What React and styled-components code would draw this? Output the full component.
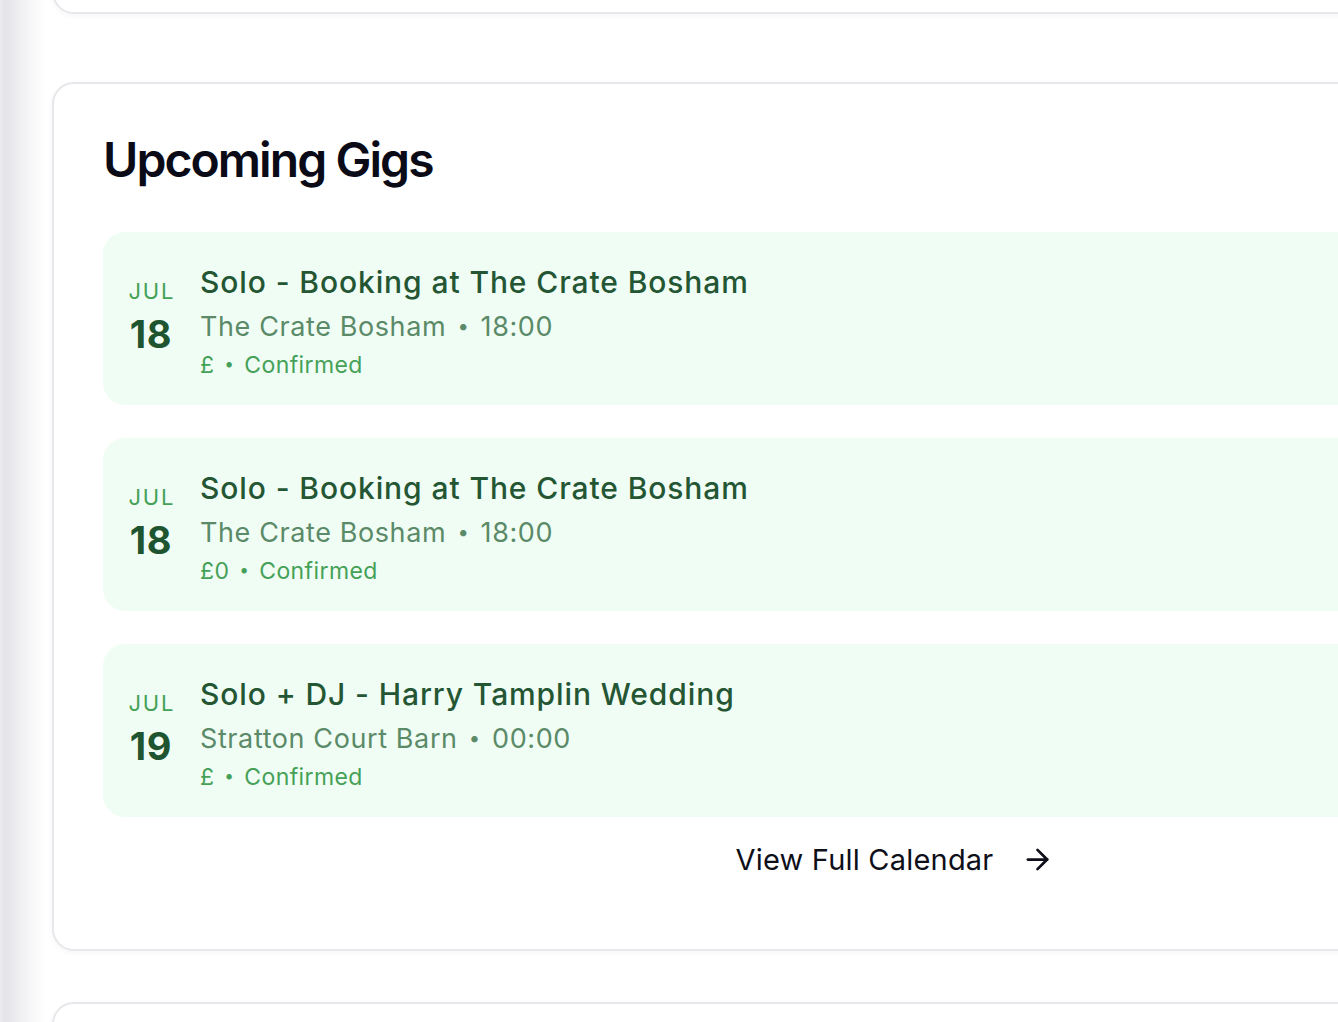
import React from 'react';
import styled, { createGlobalStyle } from 'styled-components';
import { ArrowRight } from 'lucide-react';

const gigs = [
  { id: 1, month: 'JUL', day: '18', title: 'Solo - Booking at The Crate Bosham', venue: 'The Crate Bosham', time: '18:00', fee: '£', status: 'Confirmed' },
  { id: 2, month: 'JUL', day: '18', title: 'Solo - Booking at The Crate Bosham', venue: 'The Crate Bosham', time: '18:00', fee: '£0', status: 'Confirmed' },
  { id: 3, month: 'JUL', day: '19', title: 'Solo + DJ - Harry Tamplin Wedding', venue: 'Stratton Court Barn', time: '00:00', fee: '£', status: 'Confirmed' },
];

const App = () => {
  return (
    <>
      <GlobalStyle />
      <Page>
        <Card $stub />

        <Card>
          <Heading>Upcoming Gigs</Heading>
          <GigList>
            {gigs.map((gig) => {
              return (
                <GigCard key={gig.id}>
                  <DateCol>
                    <Month>{gig.month}</Month>
                    <Day>{gig.day}</Day>
                  </DateCol>
                  <Info>
                    <GigTitle>{gig.title}</GigTitle>
                    <Venue>{gig.venue} <Dot>•</Dot> {gig.time}</Venue>
                    <Meta>{gig.fee} <Dot>•</Dot> {gig.status}</Meta>
                  </Info>
                </GigCard>
              )
            })}
          </GigList>
          <Footer>
            <CalendarLink href="#">
              View Full Calendar
              <ArrowRight size={33} strokeWidth={2} />
            </CalendarLink>
          </Footer>
        </Card>

        <Card />
      </Page>
    </>
  )
}

export default App;

const GlobalStyle = createGlobalStyle`
  html, body {
    margin: 0;
    padding: 0;
    overflow: hidden;
    background: #ffffff;
  }
  body {
    font-family: Inter, "Noto Sans", sans-serif;
    -webkit-font-smoothing: antialiased;
  }
`

const Page = styled.div`
  min-height: 100vh;
  box-sizing: border-box;
  padding-left: 52px;
  display: flex;
  flex-direction: column;
  gap: 51px;
  background: linear-gradient(90deg, #ececf0 0px, #e3e3e8 5px, #efeff2 20px, #f9f9fa 34px, #ffffff 46px);
`

const Card = styled.section`
  width: 1686px;
  box-sizing: border-box;
  flex-shrink: 0;
  background: #ffffff;
  border: 2px solid #e7e7ec;
  border-radius: 22px;
  box-shadow: 0 2px 6px rgba(20, 20, 40, 0.04);
  padding: 47px 49px 48px;
  min-height: ${(p) => (p.$stub ? '120px' : '200px')};
  margin-top: ${(p) => (p.$stub ? '-106px' : '0')};
  margin-bottom: ${(p) => (p.$stub ? '17px' : '0')};
`

const Heading = styled.h2`
  margin: 0 0 43px;
  font-size: 48px;
  line-height: 57.6px;
  font-weight: 600;
  letter-spacing: -0.04em;
  color: #0b0b18;
`

const GigList = styled.div`
  display: flex;
  flex-direction: column;
  gap: 33px;
`

const GigCard = styled.div`
  display: flex;
  align-items: flex-start;
  gap: 24px;
  background: #f0fdf4;
  border-radius: 22px;
  padding: 30px 26px 24px 23px;
`

const DateCol = styled.div`
  width: 50px;
  padding-top: 15px;
  display: flex;
  flex-direction: column;
  align-items: center;
  text-align: center;
`

const Month = styled.span`
  font-size: 22px;
  line-height: 28px;
  font-weight: 400;
  color: #45a157;
  letter-spacing: 0.08em;
  margin-right: -0.08em;
`

const Day = styled.span`
  margin-top: 7px;
  font-size: 38px;
  line-height: 44px;
  font-weight: 700;
  color: #1f5430;
  letter-spacing: 0.02em;
`

const Info = styled.div`
  display: flex;
  flex-direction: column;
`

const GigTitle = styled.div`
  font-size: 30px;
  line-height: 40px;
  font-weight: 500;
  letter-spacing: 0.9px;
  color: #245634;
`

const Venue = styled.div`
  margin-top: 7px;
  font-size: 27px;
  line-height: 36px;
  height: 36px;
  letter-spacing: 0.6px;
  color: #5b8a68;
`

const Meta = styled.div`
  margin-top: 4px;
  font-size: 23px;
  line-height: 32px;
  height: 32px;
  letter-spacing: 0.4px;
  color: #45a157;
`

const Dot = styled.span`
  font-size: 0.75em;
  line-height: 0;
  vertical-align: 0.14em;
  margin: 0 3px;
`

const Footer = styled.div`
  display: flex;
  justify-content: center;
  padding: 25px 0 24px;
`

const CalendarLink = styled.a`
  display: flex;
  align-items: center;
  gap: 28px;
  font-size: 29px;
  line-height: 35px;
  font-weight: 400;
  letter-spacing: 0.2px;
  color: #0f0f1a;
  text-decoration: none;
`
